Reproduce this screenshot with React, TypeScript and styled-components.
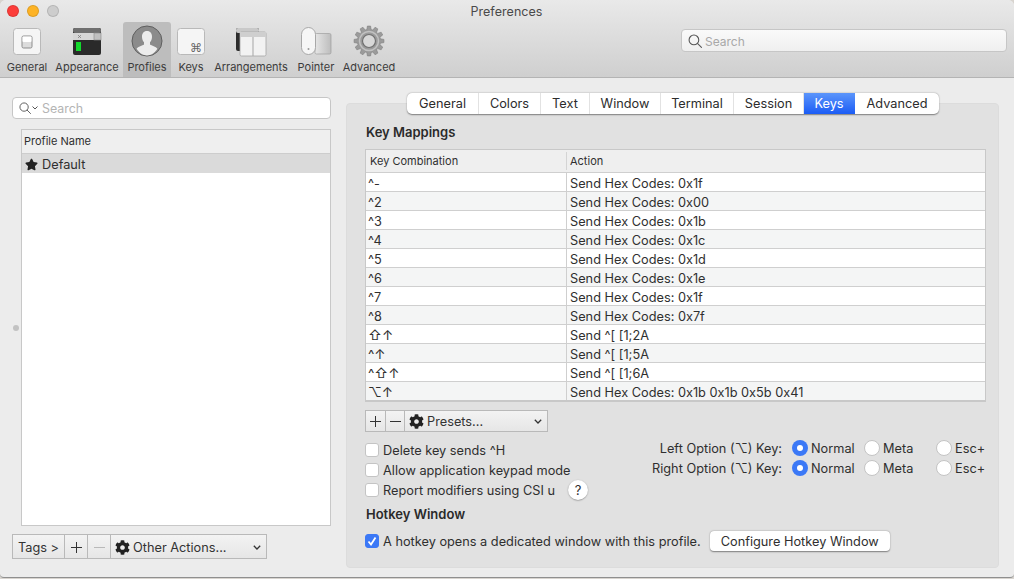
import React from "react";
import styled, { createGlobalStyle } from "styled-components";
import { FaCog, FaStar } from "react-icons/fa";

const Global = createGlobalStyle`
  html, body { margin: 0; padding: 0; background: #d8d4cf; }
  body { font-family: Inter, "Noto Sans", "DejaVu Sans", sans-serif; font-size: 12.75px; color: #2f2f2f; overflow: hidden; }
  * { box-sizing: border-box; }
`;

const Window = styled.div`
  width: 1014px; height: 578px; background: #ececec; border-bottom: 1px solid #8f8f8f;
  border-radius: 6px 6px 4px 4px; overflow: hidden; display: flex; flex-direction: column;
`;
const Head = styled.header`
  height: 78px; flex: none; background: linear-gradient(#e9e9e9, #cfcfcf); border-bottom: 1px solid #b4b4b4;
  display: flex; flex-direction: column;
`;
const TitleBar = styled.div`
  height: 22px; display: grid; grid-template-columns: 1fr auto 1fr; align-items: center; padding: 0 7px;
`;
const Lights = styled.div`display: flex; gap: 8px;`;
const Light = styled.span<{ $c: string }>`
  width: 12px; height: 12px; border-radius: 50%; background: ${p => p.$c}; border: 0.5px solid rgba(0,0,0,.12);
`;
const Title = styled.div`font-size: 12.5px; color: #4a4a4a; letter-spacing: .05px; margin-left: -1px;`;
const ToolRow = styled.div`flex: 1; display: flex; align-items: stretch; padding-left: 3px; padding-right: 7px;`;
const ToolItems = styled.nav`display: flex; gap: 4px;`;
const ToolItem = styled.div<{ $w: number; $on?: boolean }>`
  width: ${p => p.$w}px; display: flex; flex-direction: column; align-items: center; padding-top: 3px;
  background: ${p => (p.$on ? "#bdbdbd" : "transparent")}; border-radius: 3px 3px 0 0;
  font-size: 11px; line-height: 14px; color: #3c3c3c; white-space: nowrap;
  svg { display: block; margin-bottom: 3px; }
`;
const TopSearch = styled.div`
  margin-left: auto; margin-top: 7px; width: 326px; height: 23px; border-radius: 4px; border: 1px solid #c6c6c6;
  background: linear-gradient(#fafafa, #efefef); display: flex; align-items: center; gap: 3px; padding: 1px 0 0 6px;
  color: #a8a8a8; font-size: 12px;
`;
const Body = styled.main`flex: 1; display: flex; min-height: 0;`;
const LeftCol = styled.section`
  width: 319px; margin-left: 12px; padding: 19px 0 18px; display: flex; flex-direction: column;
`;
const ProfileSearch = styled.div`
  height: 22px; flex: none; border: 1px solid #c6c6c6; border-radius: 4px; background: #fff; display: flex; align-items: center;
  gap: 1px; padding-left: 6px; color: #b4b4b4; font-size: 12.4px;
`;
const SearchWord = styled.span`margin-left: 3px;`;
const ListRow = styled.div`flex: 1; margin-top: 10px; display: flex; min-height: 0; align-items: stretch;`;
const Sash = styled.div`
  width: 9px; flex: none; display: flex; align-items: center; justify-content: center; padding-right: 1px;
  &::before { content: ""; width: 6px; height: 6px; border-radius: 50%; background: #c2c2c2; }
`;
const ProfileList = styled.div`flex: 1; border: 1px solid #c8c8c8; background: #fff; display: flex; flex-direction: column;`;
const ProfileHead = styled.div`
  height: 24px; background: #efefef; border-bottom: 1px solid #cdcdcd; padding: 0 0 1px 2px; display: flex; align-items: center; font-size: 11px;
`;
const ProfileRow = styled.div`
  height: 19px; background: #dadada; display: flex; align-items: center; gap: 4px; padding: 1px 0 0 3px;
`;
const ButtonBar = styled.div<{ $h: number; $w: number }>`
  height: ${p => p.$h}px; width: ${p => p.$w}px; flex: none; display: flex; border: 1px solid #b9b9b9; background: linear-gradient(#f3f3f3, #e6e6e6);
`;
const BarCell = styled.div<{ $w?: number; $off?: boolean }>`
  ${p => (p.$w ? `width:${p.$w}px; flex:none;` : "flex:1;")}
  display: flex; align-items: center; justify-content: center; gap: 3px; padding-top: 1px;
  border-right: 1px solid #b9b9b9; color: ${p => (p.$off ? "#b9b9b9" : "#333")}; min-width: 0; white-space: nowrap;
  &:last-child { border-right: 0; justify-content: flex-start; padding: 1px 5px 0 4px; }
`;
const Chevron = styled.svg`margin-left: auto; flex: none;`;
const TagsBar = styled(ButtonBar)`margin-top: 8px;`;
const Panel = styled.section`
  position: relative; width: 653px; margin: 25px 0 9px 15px; background: #e1e1e1; border-radius: 4px; border: 1px solid #dcdcdc;
  padding: 20px 12px 0 18px; display: flex; flex-direction: column;
`;
const Tabs = styled.div`
  position: absolute; top: -11px; left: 60px; height: 21px; display: flex; background: #fff; border-radius: 5px;
  box-shadow: 0 0.5px 1.5px rgba(0,0,0,.45);
`;
const Tab = styled.div<{ $w: number; $on?: boolean }>`
  width: ${p => p.$w}px; display: flex; align-items: center; justify-content: center; color: ${p => (p.$on ? "#fff" : "#2c2c2c")};
  background: ${p => (p.$on ? "linear-gradient(#5b95fb, #1b5cf5)" : "transparent")};
  border-right: 1px solid ${p => (p.$on ? "transparent" : "#e2e2e2")};
  &:first-child { border-radius: 5px 0 0 5px; } &:last-child { border-radius: 0 5px 5px 0; border-right: 0; }
`;
const Heading = styled.h3`margin: 0; padding-left: 1px; font-size: 13px; line-height: 16px; font-weight: 600; color: #2a2a2a;`;
const KeyTable = styled.div`
  margin-top: 9px; width: 621px; border: 1px solid #c8c8c8; border-bottom-width: 2px; flex: none;
`;
const KeyRow = styled.div<{ $alt?: boolean; $head?: boolean }>`
  height: ${p => (p.$head ? 22 : 19)}px; display: grid; grid-template-columns: 200px 1fr; align-items: stretch;
  background: ${p => (p.$head ? "#efefef" : p.$alt ? "#f4f5f5" : "#fff")};
  border-top: ${p => (p.$head ? "0" : "1px solid #cfcfcf")};
  font-size: ${p => (p.$head ? "11px" : "12.75px")};
`;
const KeyCell = styled.div`padding: 2px 0 0 2px; display: flex; align-items: center; white-space: nowrap; overflow: hidden;`;
const HeadCell = styled(KeyCell)`padding: 0 0 1px 4px;`;
const HeadAction = styled(HeadCell)`padding-left: 3px; box-shadow: -1px 0 0 #d4d4d4; margin: 2px 0 2px 1px;`;
const ActionCell = styled(KeyCell)`border-left: 1px solid #cfcfcf; padding-left: 3px;`;
const Mods = styled.span`font-size: 13.5px;`;
const PresetBar = styled(ButtonBar)`margin-top: 8px;`;
const OptionGrid = styled.div`margin-top: 6px; display: flex; justify-content: space-between;`;
const CheckCol = styled.div`display: flex; flex-direction: column; padding-top: 2px;`;
const CheckRow = styled.div`height: 20px; display: flex; align-items: center; gap: 4px; white-space: nowrap;`;
const Check = styled.span<{ $on?: boolean }>`
  width: 14px; height: 14px; border-radius: 3px; flex: none; display: flex; align-items: center; justify-content: center;
  background: ${p => (p.$on ? "#3b78f6" : "#fff")}; border: 1px solid ${p => (p.$on ? "#3b78f6" : "#c4c4c4")};
`;
const Help = styled.span`
  width: 20px; height: 20px; border-radius: 50%; background: #fff; margin-left: 9px; display: flex; align-items: center; justify-content: center;
  box-shadow: 0 .5px 1.5px rgba(0,0,0,.4); font-size: 13px;
`;
const RadioCol = styled.div`display: flex; flex-direction: column;`;
const RadioRow = styled.div`height: 20px; display: flex; align-items: center; justify-content: flex-end; white-space: nowrap;`;
const RadioLabel = styled.span`margin-right: 10px;`;
const Radio = styled.span<{ $on?: boolean }>`
  width: 16px; height: 16px; border-radius: 50%; flex: none; display: flex; align-items: center; justify-content: center;
  background: ${p => (p.$on ? "#3b78f6" : "#fff")}; border: ${p => (p.$on ? "0" : "1px solid #c4c4c4")};
  &::after { content: ""; width: 6px; height: 6px; border-radius: 50%; background: ${p => (p.$on ? "#fff" : "transparent")}; }
`;
const RadioOpt = styled.span<{ $w: number }>`width: ${p => p.$w}px; display: flex; align-items: center; gap: 3px;`;
const HotHeading = styled(Heading)`margin-top: 6px;`;
const HotRow = styled.div`margin-top: 9px; display: flex; align-items: center; gap: 4px; white-space: nowrap;`;
const PushButton = styled.div`
  margin-left: 5px; width: 180px; height: 20px; background: #fff; border-radius: 4px; display: flex; align-items: center; justify-content: center;
  box-shadow: 0 .5px 1.5px rgba(0,0,0,.45);
`;

const gearPath = (() => {
  const pts: string[] = [];
  const n = 12, cx = 16, cy = 16;
  for (let i = 0; i < n; i++) {
    const a = (i / n) * Math.PI * 2;
    const st = (Math.PI * 2) / n;
    [[-0.3, 11.6], [-0.17, 15], [0.17, 15], [0.3, 11.6]].forEach(([o, r]) => {
      const t = a + o * st * 1.2;
      pts.push(`${(cx + r * Math.cos(t)).toFixed(2)} ${(cy + r * Math.sin(t)).toFixed(2)}`);
    });
  }
  return "M" + pts.join("L") + "Z";
})();

const SearchGlass = ({ size = 14 }: { size?: number }) => (
  <svg width={size} height={size} viewBox="0 0 13 13" fill="none" stroke="#555" strokeWidth="1">
    <circle cx="5.5" cy="5.5" r="4.5" />
    <path d="M9 9l3.5 3.5" strokeLinecap="round" />
  </svg>
);
const Down = () => (
  <Chevron width="8" height="5" viewBox="0 0 8 5" fill="none" stroke="#333" strokeWidth="1.3">
    <path d="M.8.8L4 4 7.200.8" />
  </Chevron>
);
const GeneralIcon = () => (
  <svg width="32" height="32" viewBox="0 0 32 32">
    <rect x="2.5" y="3.5" width="27" height="26" rx="3" fill="#f5f5f5" stroke="#b9b9b9" />
    <rect x="11" y="11" width="10" height="12" rx="1.5" fill="#dcdcdc" stroke="#8d8d8d" />
    <rect x="11.5" y="11.5" width="9" height="5.5" rx="1" fill="#fff" />
  </svg>
);
const AppearanceIcon = () => (
  <svg width="32" height="32" viewBox="0 0 32 32">
    <rect x="2" y="3" width="28" height="27" rx="2" fill="#2a2a2a" />
    <rect x="2" y="3" width="28" height="5" rx="2" fill="#6f6f6f" />
    <rect x="2" y="8" width="28" height="7" fill="#d6d6d6" />
    <rect x="23" y="8" width="7" height="7" fill="#c0c0c0" stroke="#888" strokeWidth=".6" />
    <path d="M7 10l3 3M10 10l-3 3" stroke="#777" strokeWidth=".7" />
    <rect x="5" y="17" width="5" height="9" fill="#12d92c" />
  </svg>
);
const ProfilesIcon = () => (
  <svg width="32" height="32" viewBox="0 0 32 32">
    <circle cx="16" cy="16" r="15" fill="#8b8b8b" stroke="#5f5f5f" />
    <path d="M16 6c-3.4 0-5.2 2.7-5 6 .1 2 .8 4 2 5.3v2.2c-1.5 1.2-6 2-7.400 4.300C8.200 28 12 30.500 16 30.500s7.800-2.500 10.400-6.700C25 21.500 20.500 20.700 19 19.500v-2.200c1.200-1.300 1.900-3.300 2-5.300.2-3.300-1.600-6-5-6z" fill="#ececec" />
  </svg>
);
const KeysIcon = () => (
  <svg width="32" height="32" viewBox="0 0 32 32">
    <rect x="2.500" y="3.500" width="27" height="26" rx="3" fill="#f5f5f5" stroke="#b9b9b9" />
    <text x="27" y="27" textAnchor="end" fontSize="12" fontFamily="DejaVu Sans" fill="#666">⌘</text>
  </svg>
);
const ArrangementsIcon = () => (
  <svg width="32" height="32" viewBox="0 0 32 32">
    <rect x="1" y="3" width="23" height="23" rx="2" fill="#2c2c2c" />
    <rect x="1" y="3" width="23" height="5" rx="2" fill="#c9c9c9" />
    <rect x="5" y="7" width="26" height="24" rx="1.500" fill="#f2f2f2" stroke="#a5a5a5" strokeWidth=".8" />
    <rect x="5" y="7" width="26" height="5" fill="#cfcfcf" />
    <path d="M18 12v19" stroke="#a5a5a5" />
  </svg>
);
const PointerIcon = () => (
  <svg width="32" height="32" viewBox="0 0 32 32">
    <defs>
      <linearGradient id="pad" x1="0" x2="1" y1="0" y2="0">
        <stop offset="0" stopColor="#e6e6e6" />
        <stop offset="1" stopColor="#bdbdbd" />
      </linearGradient>
    </defs>
    <rect x="15" y="8.500" width="16" height="20.500" rx="1.500" fill="url(#pad)" stroke="#9f9f9f" strokeWidth=".7" />
    <rect x="1.500" y="2.500" width="14" height="27" rx="7" fill="#f6f6f6" stroke="#a8a8a8" />
    <circle cx="8.500" cy="24" r="1" fill="#9a9a9a" />
  </svg>
);
const AdvancedIcon = () => (
  <svg width="32" height="32" viewBox="0 0 32 32">
    <path d={gearPath} fill="#9b9b9b" stroke="#7d7d7d" strokeWidth=".6" />
    <circle cx="16" cy="16" r="9.500" fill="none" stroke="#c2c2c2" strokeWidth="1.500" />
    <circle cx="16" cy="16" r="6.500" fill="#d8d8d8" stroke="#6f6f6f" strokeWidth="1.200" />
  </svg>
);

const tools = [
  { l: "General", w: 48, I: GeneralIcon },
  { l: "Appearance", w: 64, I: AppearanceIcon },
  { l: "Profiles", w: 48, I: ProfilesIcon, on: true },
  { l: "Keys", w: 32, I: KeysIcon },
  { l: "Arrangements", w: 80, I: ArrangementsIcon },
  { l: "Pointer", w: 42, I: PointerIcon },
  { l: "Advanced", w: 56, I: AdvancedIcon },
];
const tabs = [
  { l: "General", w: 72 }, { l: "Colors", w: 62 }, { l: "Text", w: 49 }, { l: "Window", w: 71 },
  { l: "Terminal", w: 73 }, { l: "Session", w: 70 }, { l: "Keys", w: 51, on: true }, { l: "Advanced", w: 84 },
];
const keys: [string, string, boolean?][] = [
  ["^-", "Send Hex Codes: 0x1f"], ["^2", "Send Hex Codes: 0x00"], ["^3", "Send Hex Codes: 0x1b"],
  ["^4", "Send Hex Codes: 0x1c"], ["^5", "Send Hex Codes: 0x1d"], ["^6", "Send Hex Codes: 0x1e"],
  ["^7", "Send Hex Codes: 0x1f"], ["^8", "Send Hex Codes: 0x7f"], ["⇧↑", "Send ^[ [1;2A", true],
  ["^↑", "Send ^[ [1;5A", true], ["^⇧↑", "Send ^[ [1;6A", true], ["⌥↑", "Send Hex Codes: 0x1b 0x1b 0x5b 0x41", true],
];
const radios = ["Left Option (⌥) Key:", "Right Option (⌥) Key:"];

export default function App() {
  return (
    <>
      <Global />
      <Window>
        <Head>
          <TitleBar>
            <Lights>
              <Light $c="#fc3d3a" /><Light $c="#fdb325" /><Light $c="#cdcdcd" />
            </Lights>
            <Title>Preferences</Title>
            <span />
          </TitleBar>
          <ToolRow>
            <ToolItems>
              {tools.map(({ l, w, I, on }) => (
                <ToolItem key={l} $w={w} $on={on}><I />{l}</ToolItem>
              ))}
            </ToolItems>
            <TopSearch><SearchGlass />Search</TopSearch>
          </ToolRow>
        </Head>
        <Body>
          <LeftCol>
            <ProfileSearch>
              <SearchGlass size={12} />
              <svg width="6" height="4" viewBox="0 0 6 4" fill="none" stroke="#555"><path d="M.5.5L3 3l2.500-2.500" /></svg>
              <SearchWord>Search</SearchWord>
            </ProfileSearch>
            <ListRow>
              <Sash />
              <ProfileList>
                <ProfileHead>Profile Name</ProfileHead>
                <ProfileRow><FaStar size={13} color="#222" />Default</ProfileRow>
              </ProfileList>
            </ListRow>
            <TagsBar $h={25} $w={255}>
              <BarCell $w={52}>Tags &gt;</BarCell>
              <BarCell $w={23}><PlusIcon /></BarCell>
              <BarCell $w={23} $off><MinusIcon /></BarCell>
              <BarCell><FaCog size={15} color="#222" />Other Actions...<Down /></BarCell>
            </TagsBar>
          </LeftCol>
          <Panel>
            <Tabs>
              {tabs.map(t => <Tab key={t.l} $w={t.w} $on={t.on}>{t.l}</Tab>)}
            </Tabs>
            <Heading>Key Mappings</Heading>
            <KeyTable>
              <KeyRow $head>
                <HeadCell>Key Combination</HeadCell>
                <HeadAction>Action</HeadAction>
              </KeyRow>
              {keys.map(([k, a, sym], i) => (
                <KeyRow key={i} $alt={i % 2 === 1}>
                  <KeyCell>{sym ? <Mods>{k}</Mods> : k}</KeyCell>
                  <ActionCell>{a}</ActionCell>
                </KeyRow>
              ))}
            </KeyTable>
            <PresetBar $h={22} $w={183}>
              <BarCell $w={20}><PlusIcon /></BarCell>
              <BarCell $w={19}><MinusIcon /></BarCell>
              <BarCell><FaCog size={15} color="#222" />Presets...<Down /></BarCell>
            </PresetBar>
            <OptionGrid>
              <CheckCol>
                <CheckRow><Check />Delete key sends ^H</CheckRow>
                <CheckRow><Check />Allow application keypad mode</CheckRow>
                <CheckRow><Check />Report modifiers using CSI u<Help>?</Help></CheckRow>
              </CheckCol>
              <RadioCol>
                {radios.map(r => (
                  <RadioRow key={r}>
                    <RadioLabel>{r}</RadioLabel>
                    <RadioOpt $w={72}><Radio $on />Normal</RadioOpt>
                    <RadioOpt $w={72}><Radio />Meta</RadioOpt>
                    <RadioOpt $w={50}><Radio />Esc+</RadioOpt>
                  </RadioRow>
                ))}
              </RadioCol>
            </OptionGrid>
            <HotHeading>Hotkey Window</HotHeading>
            <HotRow>
              <Check $on>
                <svg width="10" height="10" viewBox="0 0 10 10" fill="none" stroke="#fff" strokeWidth="1.800"><path d="M1.500 5.500l2.500 3L8.500 1.500" /></svg>
              </Check>
              A hotkey opens a dedicated window with this profile.
              <PushButton>Configure Hotkey Window</PushButton>
            </HotRow>
          </Panel>
        </Body>
      </Window>
    </>
  );
}

function PlusIcon() {
  return <svg width="11" height="11" viewBox="0 0 11 11" stroke="currentColor" strokeWidth="1"><path d="M5.500 0v11M0 5.500h11" /></svg>;
}
function MinusIcon() {
  return <svg width="11" height="11" viewBox="0 0 11 11" stroke="currentColor" strokeWidth="1"><path d="M0 5.500h11" /></svg>;
}
